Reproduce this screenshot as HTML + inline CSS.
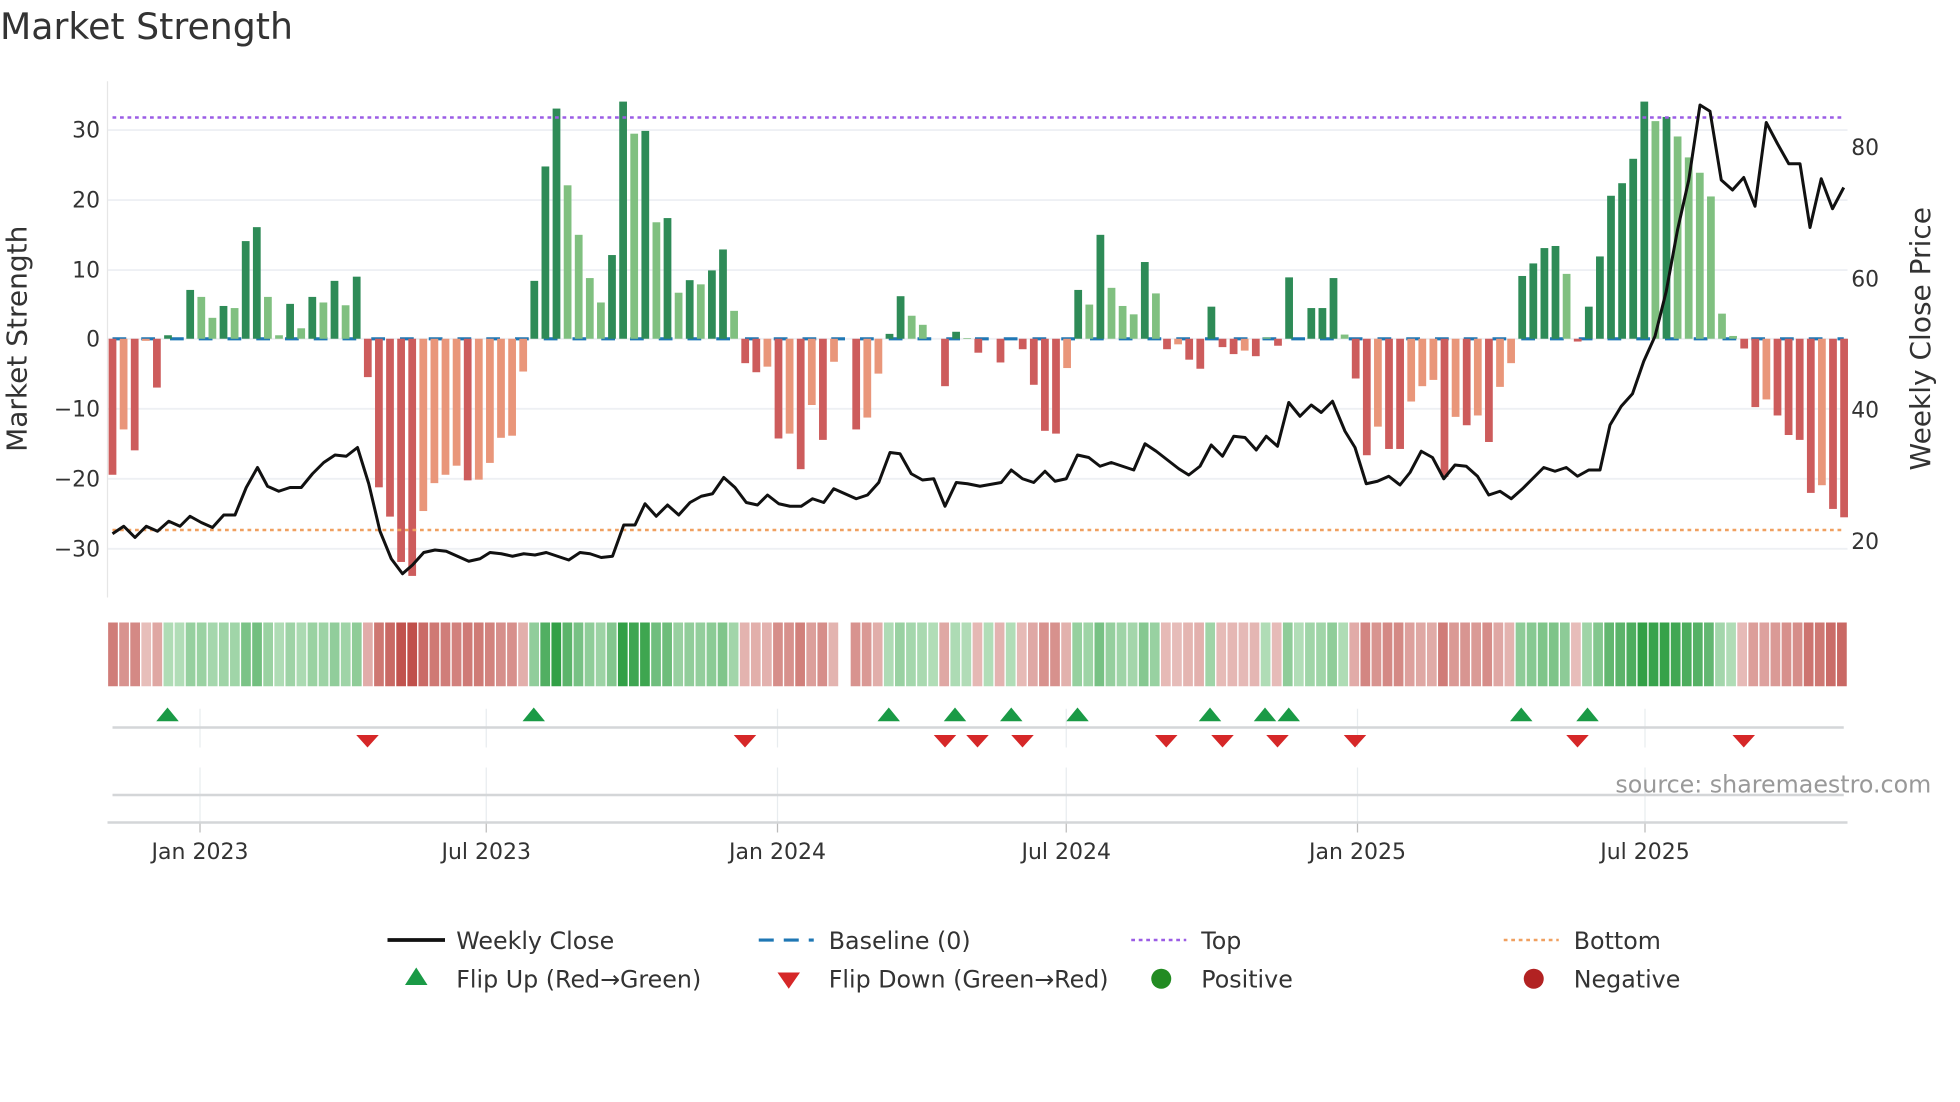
<!DOCTYPE html>
<html><head><meta charset="utf-8"><style>
html,body{margin:0;padding:0;background:#fff;}
svg{display:block;font-family:"DejaVu Sans","Liberation Sans",sans-serif;}
</style></head><body>
<svg id="s" width="1960" height="1102" viewBox="0 0 1568 881.6" xmlns="http://www.w3.org/2000/svg">
<text x="0" y="31" font-size="29" fill="#333">Market Strength</text>
<g id="grid"></g>
<line x1="86" y1="65" x2="86" y2="478" stroke="#e6e6e6" stroke-width="1"/>
<g font-size="17.5" fill="#333" text-anchor="end">
<text x="80" y="110">30</text><text x="80" y="166">20</text><text x="80" y="222">10</text><text x="80" y="277">0</text>
<text x="80" y="333">−10</text><text x="80" y="389">−20</text><text x="80" y="445">−30</text>
</g>
<g font-size="17.5" fill="#333">
<text x="1481" y="124">80</text><text x="1481" y="229">60</text><text x="1481" y="334">40</text><text x="1481" y="439">20</text>
</g>
<text transform="translate(21,271) rotate(-90)" font-size="22.4" fill="#333" text-anchor="middle">Market Strength</text>
<text transform="translate(1544,271) rotate(-90)" font-size="22.4" fill="#333" text-anchor="middle">Weekly Close Price</text>
<line x1="90" y1="271" x2="1475" y2="271" stroke="#1f77b4" stroke-width="2.5" stroke-dasharray="11 12"/>
<g id="bars"></g>
<line x1="90" y1="94" x2="1475" y2="94" stroke="#9b5de5" stroke-width="2" stroke-dasharray="3 3"/>
<line x1="90" y1="424" x2="1475" y2="424" stroke="#f0a060" stroke-width="2" stroke-dasharray="3 3"/>
<polyline id="price" fill="none" stroke="#111" stroke-width="2.4" stroke-linejoin="round"/>
<g id="heat"></g>
<g id="vgrid" stroke="#e8ecef" stroke-width="1"></g>
<line x1="90" y1="582" x2="1475" y2="582" stroke="#d4d6d8" stroke-width="2"/>
<line x1="90" y1="636" x2="1475" y2="636" stroke="#d4d6d8" stroke-width="2"/>
<line x1="86" y1="658" x2="1478" y2="658" stroke="#d4d6d8" stroke-width="2"/>
<g id="flips"></g>
<text x="1545" y="634" font-size="19" fill="#999" text-anchor="end">source: sharemaestro.com</text>
<g font-size="17.6" fill="#333" text-anchor="middle">
<text x="160" y="687">Jan 2023</text><text x="389" y="687">Jul 2023</text><text x="622" y="687">Jan 2024</text>
<text x="853" y="687">Jul 2024</text><text x="1086" y="687">Jan 2025</text><text x="1316" y="687">Jul 2025</text>
</g>
<g font-size="19" fill="#333">
<line x1="310" y1="752" x2="356" y2="752" stroke="#111" stroke-width="3"/>
<text x="365" y="759">Weekly Close</text>
<line x1="607" y1="752" x2="651" y2="752" stroke="#1f77b4" stroke-width="2.5" stroke-dasharray="12 8"/>
<text x="663" y="759">Baseline (0)</text>
<line x1="905" y1="752" x2="949" y2="752" stroke="#9b5de5" stroke-width="2" stroke-dasharray="3 3"/>
<text x="961" y="759">Top</text>
<line x1="1203" y1="752" x2="1247" y2="752" stroke="#f0a060" stroke-width="2" stroke-dasharray="3 3"/>
<text x="1259" y="759">Bottom</text>
<polygon points="333,774 342,788 324,788" fill="#1a9a46"/>
<text x="365" y="790">Flip Up (Red→Green)</text>
<polygon points="622,778 640,778 631,791" fill="#d62728"/>
<text x="663" y="790">Flip Down (Green→Red)</text>
<circle cx="929" cy="783" r="8" fill="#228b22"/>
<text x="961" y="790">Positive</text>
<circle cx="1227" cy="783" r="8" fill="#b22222"/>
<text x="1259" y="790">Negative</text>
</g>
</svg>
<script>
(function(){
var NS="http://www.w3.org/2000/svg";
function el(p,t,a){var e=document.createElementNS(NS,t);for(var k in a)e.setAttribute(k,a[k]);document.getElementById(p).appendChild(e);return e;}
[104,160,216,271,327,383,439].forEach(function(y){el("grid","line",{x1:86,x2:1478,y1:y,y2:y,stroke:"#eef0f4","stroke-width":1.5});});
var L=[[-19.5,1],[-13,0],[-16,1],[-0.3,0],[-7,1],[0.5,1],[0,0],[7,1],[6,0],[3,0],
[4.7,1],[4.4,0],[14,1],[16,1],[6,0],[0.5,0],[5,1],[1.5,0],[6,1],[5.2,0],
[8.3,1],[4.8,0],[8.9,1],[-5.5,1],[-21.3,1],[-25.5,1],[-32,1],[-34,1],[-24.7,0],[-20.7,0],
[-19.5,0],[-18.2,0],[-20.3,1],[-20.2,0],[-17.8,0],[-14.2,0],[-13.9,0],[-4.7,0],[8.3,1],[24.7,1],
[33,1],[22,0],[14.9,0],[8.7,0],[5.2,0],[12,1],[34,1],[29.4,0],[29.8,1],[16.7,0],
[17.3,1],[6.6,0],[8.4,1],[7.8,0],[9.8,1],[12.8,1],[4,0],[-3.5,1],[-4.8,1],[-4,0],
[-14.3,1],[-13.6,0],[-18.7,1],[-9.5,0],[-14.5,1],[-3.3,0],[0,0],[-13,1],[-11.3,0],[-5,0],
[0.7,1],[6.1,1],[3.3,0],[2,0],[0,0],[-6.8,1],[1,1],[0.1,0],[-2,1],[0,0]];
var R=[[-3.4,1],[0,0],[-1.5,1],[-6.6,1],[-13.2,1],[-13.6,1],[-4.2,0],[7,1],[4.9,0],[14.9,1],
[7.3,0],[4.7,0],[3.5,0],[11,1],[6.5,0],[-1.5,1],[-0.8,0],[-3,1],[-4.3,1],[4.6,1],
[-1.2,1],[-2.2,1],[-1.7,0],[-2.5,1],[0.2,0],[-1,1],[8.8,1],[0,0],[4.4,1],[4.4,1],
[8.7,1],[0.6,0],[-5.7,1],[-16.7,1],[-12.6,0],[-15.8,1],[-15.8,1],[-9,0],[-6.8,0],[-5.9,0],
[-19.8,1],[-11.2,0],[-12.4,1],[-11,0],[-14.8,1],[-6.9,0],[-3.5,0],[9,1],[10.8,1],[13,1],
[13.3,1],[9.3,0],[-0.4,1],[4.6,1],[11.8,1],[20.5,1],[22.3,1],[25.8,1],[34,1],[31.2,0],
[31.8,1],[29,0],[26,0],[23.8,0],[20.4,0],[3.6,0],[0.4,0],[-1.4,1],[-9.8,1],[-8.7,0],
[-11,1],[-13.8,1],[-14.5,1],[-22.1,1],[-21,0],[-24.4,1],[-25.6,1]];
var V=L.concat(R), step=8.88, cw=(1478-86)/V.length;
V.forEach(function(d,i){
 var v=d[0],x=90+i*step,h=Math.abs(v)*5.58;
 if(h>0.3){
  var c=v>0?(d[1]?"#2e8b57":"#80c080"):(d[1]?"#cd5c5c":"#e9967a");
  el("bars","rect",{x:x-3.1,width:6.2,y:v>0?271-h:271,height:h,fill:c});
 }
 if(i==66) return;
 var t=Math.min(1,0.18+Math.abs(v)/40), col;
 if(v>=0){col="rgb("+Math.round(205-(205-50)*t)+","+Math.round(234-(234-160)*t)+","+Math.round(208-(208-70)*t)+")";}
 else{col="rgb("+Math.round(240-(240-192)*t)+","+Math.round(215-(215-80)*t)+","+Math.round(212-(212-75)*t)+")";}
 el("heat","rect",{x:86+i*cw+0.5,y:498,width:cw-1.1,height:51,fill:col});
});
var P=[[90,427],[99,421],[108,430],[117,421],[126,425],[135,417],[144,421],[152,413],[161,418],[170,422],[179,412],[188,412],[197,390],[206,374],[214,389],[223,393],[232,390],[241,390],[250,379],[259,370],[268,364],[277,365],[286,358],[295,387],[304,425],[313,447],[322,459],[330,452],[339,442],[348,440],[357,441],[366,445],[375,449],[384,447],[392,442],[401,443],[410,445],[419,443],[428,444],[437,442],[446,445],[455,448],[464,442],[472,443],[481,446],[490,445],[499,420],[508,420],[516,403],[525,413],[534,404],[543,412],[552,402],[561,397],[570,395],[579,382],[588,390],[597,402],[606,404],[614,396],[623,403],[632,405],[641,405],[650,399],[659,402],[667,391],[676,395],[685,399],[694,396],[703,386],[712,362],[720,363],[729,379],[738,384],[747,383],[756,405],[765,386],[774,387],[784,389],[801,386],[809,376],[818,383],[827,386],[836,377],[844,385],[853,383],[862,364],[871,366],[880,373],[889,370],[898,373],[907,376],[916,355],[925,361],[934,368],[943,375],[951,380],[960,373],[969,356],[978,365],[987,349],[996,350],[1005,360],[1013,349],[1022,357],[1031,322],[1040,333],[1049,324],[1057,330],[1066,321],[1076,345],[1084,358],[1093,387],[1102,385],[1111,381],[1120,388],[1128,378],[1137,361],[1146,366],[1155,383],[1164,372],[1173,373],[1182,381],[1191,396],[1200,393],[1209,399],[1218,391],[1226,383],[1235,374],[1244,377],[1253,374],[1262,381],[1271,376],[1280,376],[1288,340],[1297,325],[1306,315],[1315,289],[1324,269],[1333,233],[1342,184],[1351,144],[1360,84],[1368,89],[1377,144],[1386,152],[1395,142],[1404,165],[1413,98],[1422,115],[1431,131],[1440,131],[1448,182],[1457,143],[1466,167],[1475,150]];
document.getElementById("price").setAttribute("points",P.map(function(p){return p.join(",")}).join(" "));
[160,389,622,853,1086,1316].forEach(function(x){
 el("vgrid","line",{x1:x,x2:x,y1:567,y2:598});
 el("vgrid","line",{x1:x,x2:x,y1:614,y2:658});
 el("vgrid","line",{x1:x,x2:x,y1:658,y2:666,stroke:"#bbb"});
});
[134,427,711,764,809,862,968,1012,1031,1217,1270].forEach(function(x){
 el("flips","polygon",{points:x+",566 "+(x+9)+",577 "+(x-9)+",577",fill:"#1a9a46"});});
[294,596,756,782,818,933,978,1022,1084,1262,1395].forEach(function(x){
 el("flips","polygon",{points:(x-9)+",588 "+(x+9)+",588 "+x+",598",fill:"#d62728"});});
})();
</script>
</body></html>
